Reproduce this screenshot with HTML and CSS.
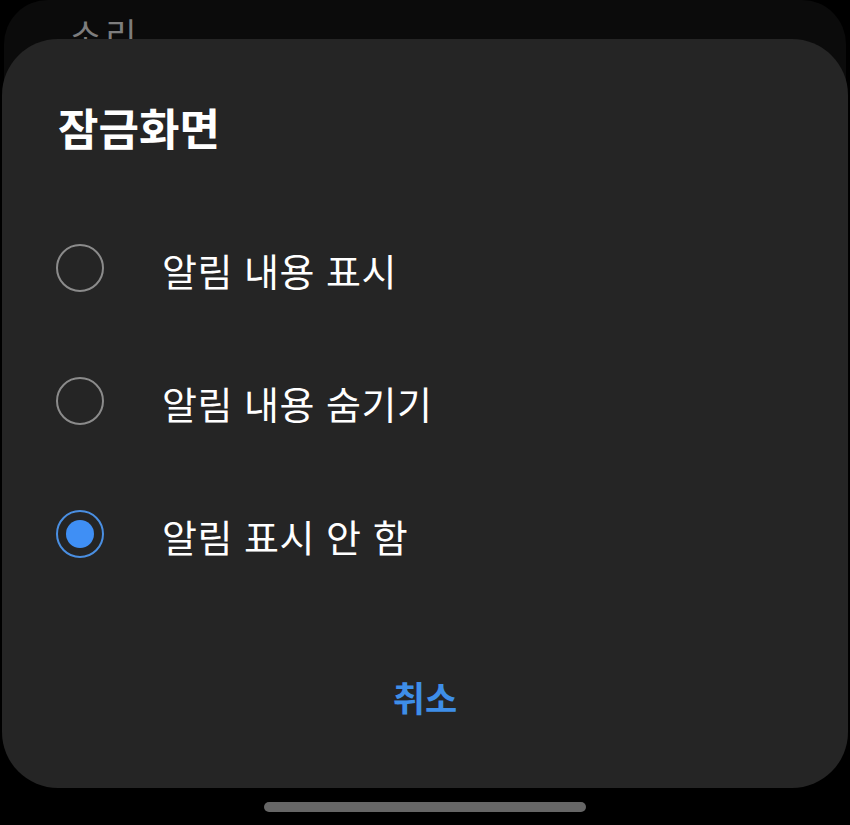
FILE: index.html
```html
<!DOCTYPE html>
<html lang="ko">
<head>
    <meta charset="UTF-8">
    <meta name="viewport" content="width=device-width, initial-scale=1.0">
    <title>잠금화면</title>
    <link rel="stylesheet" href="styles.css">
</head>
<body>
    <div class="screen">
        <!-- page behind the dialog -->
        <div class="behind">
            <div class="behind-title">소리</div>
        </div>

        <div class="dialog">
            <h1 class="dialog-title">잠금화면</h1>
            <ul class="options">
                <li class="option">
                    <span class="radio"></span>
                    <span class="label">알림 내용 표시</span>
                </li>
                <li class="option">
                    <span class="radio"></span>
                    <span class="label">알림 내용 숨기기</span>
                </li>
                <li class="option">
                    <span class="radio checked"></span>
                    <span class="label">알림 표시 안 함</span>
                </li>
            </ul>
            <div class="actions">
                <button class="cancel">취소</button>
            </div>
        </div>

        <div class="nav-bar">
            <span class="home-indicator"></span>
        </div>
    </div>
</body>
</html>
```

FILE: styles.css
```css
body {
    margin: 0;
    background-color: #000;
    font-family: "Noto Sans CJK KR", "Noto Sans", sans-serif;
    color: #fff;
}
.screen {
    position: relative;
    width: 850px;
    height: 825px;
    overflow: hidden;
}
.behind {
    margin: 0 4px;
    height: 120px;
    background-color: #0b0b0b;
    border-radius: 44px 44px 0 0;
    padding: 14px 0 0 66px;
    box-sizing: border-box;
}
.behind-title {
    font-size: 34px;
    color: #7d7d7d;
    line-height: 40px;
    letter-spacing: 4px;
}
.dialog {
    position: absolute;
    left: 2px;
    right: 2px;
    top: 39px;
    height: 749px;
    background-color: #252525;
    border-radius: 56px;
    padding: 62px 0 0 0;
    box-sizing: border-box;
}
.dialog-title {
    margin: 0 0 0 56px;
    font-size: 44px;
    font-weight: 700;
    line-height: 52px;
}
.options {
    list-style: none;
    margin: 48px 0 0 0;
    padding: 0;
}
.option {
    display: flex;
    align-items: center;
    height: 133px;
    padding-left: 54px;
}
.radio {
    width: 48px;
    height: 48px;
    border: 2px solid #8b8b8b;
    border-radius: 50%;
    box-sizing: border-box;
    margin-right: 58px;
    display: flex;
    align-items: center;
    justify-content: center;
}
.radio.checked {
    border-color: #4a8fe2;
}
.radio.checked::after {
    content: "";
    width: 28px;
    height: 28px;
    border-radius: 50%;
    background-color: #3f8ff5;
}
.label {
    font-size: 38px;
    line-height: 44px;
    letter-spacing: 0.5px;
    margin-top: 4px;
}
.actions {
    display: flex;
    justify-content: center;
    margin-top: 69px;
}
.cancel {
    background: none;
    border: none;
    font-family: inherit;
    font-size: 35px;
    font-weight: 700;
    line-height: 40px;
    color: #3e8ee8;
    padding: 8px 20px;
}
.nav-bar {
    position: absolute;
    left: 0;
    right: 0;
    bottom: 0;
    height: 37px;
    display: flex;
    justify-content: center;
    align-items: center;
}
.home-indicator {
    width: 322px;
    height: 10px;
    border-radius: 5px;
    background-color: #666;
}
```
